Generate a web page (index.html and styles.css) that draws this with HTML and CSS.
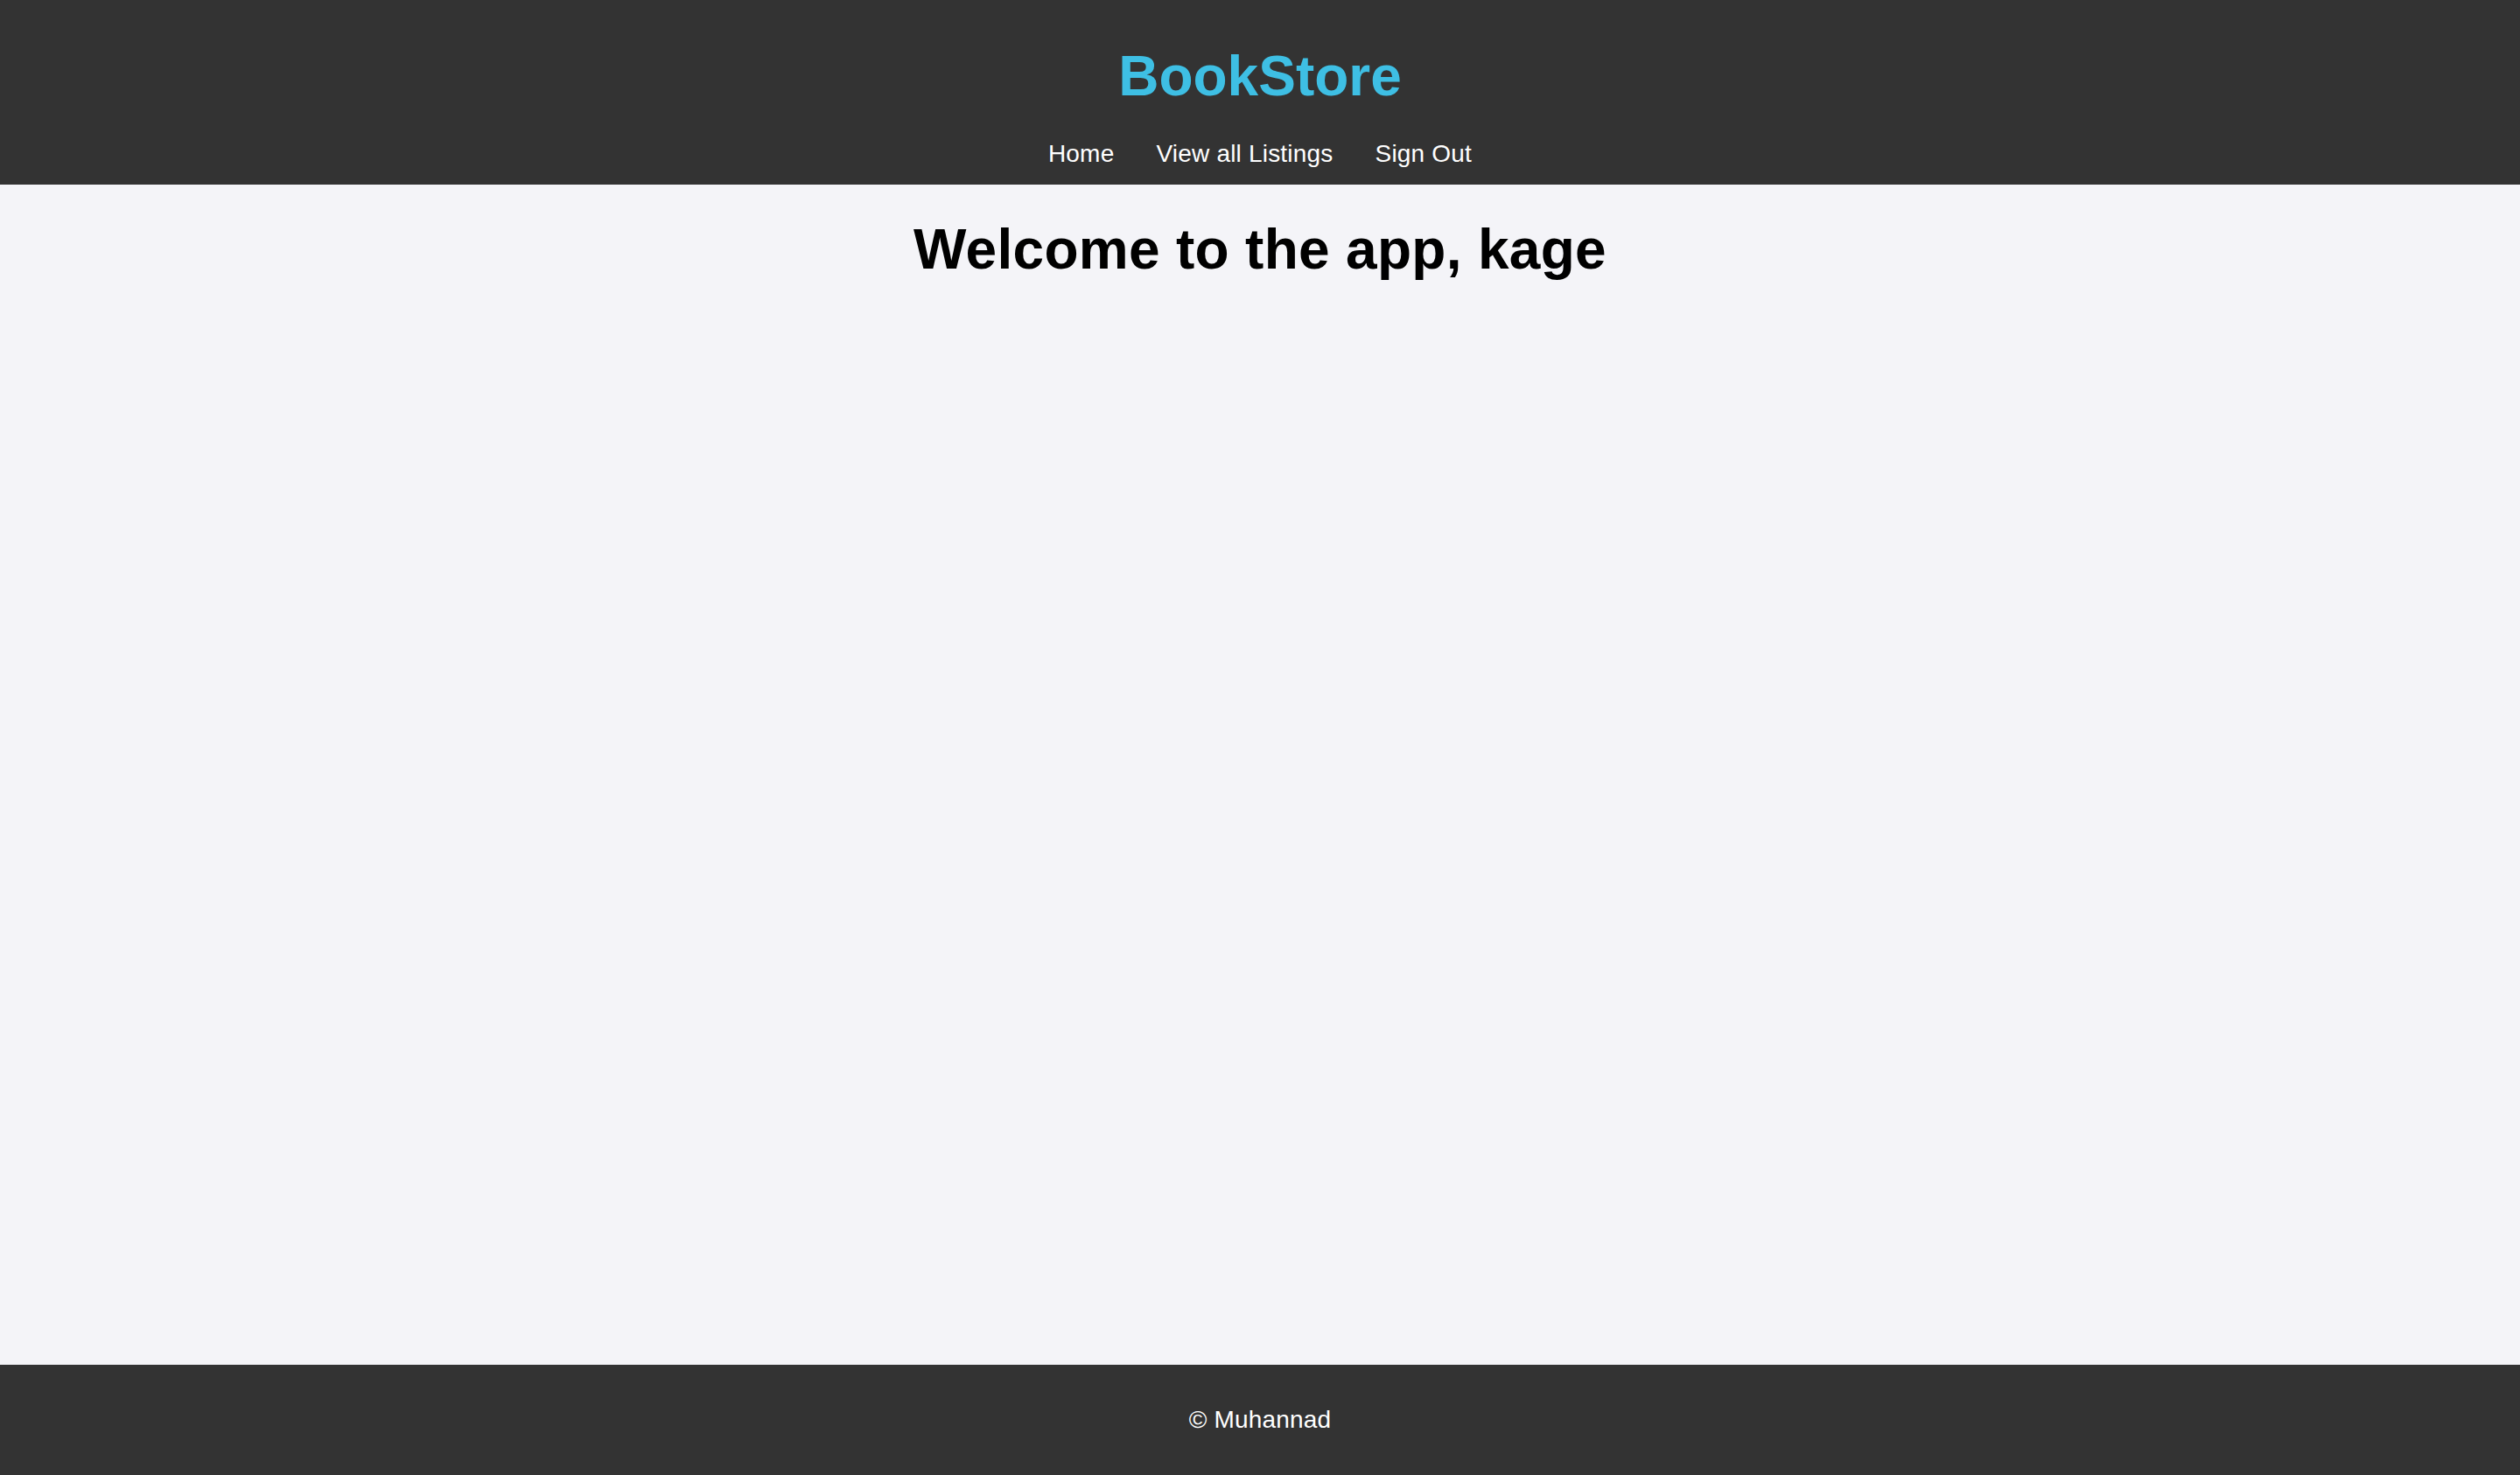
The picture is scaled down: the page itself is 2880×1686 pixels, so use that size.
FILE: index.html
```html
<!DOCTYPE html>
<html lang="en">
<head>
<meta charset="utf-8">
<title>BookStore</title>
<link rel="stylesheet" href="styles.css">
</head>
<body>
<header class="site-header">
  <h1 class="brand">BookStore</h1>
  <nav class="nav">
    <a href="#" class="nav-link">Home</a>
    <a href="#" class="nav-link">View all Listings</a>
    <a href="#" class="nav-link">Sign Out</a>
  </nav>
</header>
<main class="content">
  <h1 class="welcome">Welcome to the app, kage</h1>
</main>
<footer class="site-footer">
  <p class="copy">&copy; Muhannad</p>
</footer>
</body>
</html>
```
FILE: styles.css
```css
* { box-sizing: border-box; }
html, body { height: 100%; }
body {
  margin: 0;
  min-height: 100vh;
  display: flex;
  flex-direction: column;
  background: #f4f4f8;
  font-family: "Liberation Sans", Arial, sans-serif;
  color: #000;
}
.site-header {
  background: #333333;
  height: 211px;
  padding-top: 50px;
  display: flex;
  flex-direction: column;
  align-items: center;
}
.brand {
  margin: 0;
  font-size: 64px;
  font-weight: bold;
  color: #3ebfe4;
  line-height: normal;
}
.nav {
  margin-top: 36px;
  display: flex;
  gap: 48px;
}
.nav-link {
  color: #ffffff;
  text-decoration: none;
  font-size: 28px;
  line-height: normal;
  letter-spacing: 0.2px;
}
.content {
  flex: 1;
  padding-top: 37px;
  text-align: center;
}
.welcome {
  margin: 0;
  font-size: 64px;
  font-weight: bold;
  line-height: normal;
  letter-spacing: 0.3px;
}
.site-footer {
  background: #333333;
  height: 126px;
  display: flex;
  align-items: center;
  justify-content: center;
}
.copy {
  margin: 0;
  color: #ffffff;
  font-size: 28px;
  line-height: normal;
  letter-spacing: 0.2px;
}
```
